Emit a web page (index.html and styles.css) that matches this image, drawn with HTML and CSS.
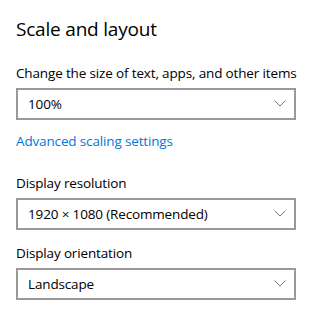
FILE: index.html
```html
<!DOCTYPE html>
<html lang="en">
<head>
    <meta charset="UTF-8">
    <title>Scale and layout</title>
    <link rel="stylesheet" href="styles.css">
</head>
<body>

<div class="panel">
    <h2 class="title">Scale and layout</h2>

    <div class="field">
        <div class="label">Change the size of text, apps, and other items</div>
        <div class="select">
            <span>100%</span>
            <svg class="chevron" width="12" height="7" viewBox="0 0 12 7"><path d="M0.5 0.5 L6 6 L11.5 0.5" fill="none" stroke="#777" stroke-width="1"/></svg>
        </div>
    </div>

    <a class="link" href="#">Advanced scaling settings</a>

    <div class="field">
        <div class="label">Display resolution</div>
        <div class="select">
            <span>1920 × 1080 (Recommended)</span>
            <svg class="chevron" width="12" height="7" viewBox="0 0 12 7"><path d="M0.5 0.5 L6 6 L11.5 0.5" fill="none" stroke="#777" stroke-width="1"/></svg>
        </div>
    </div>

    <div class="field">
        <div class="label">Display orientation</div>
        <div class="select">
            <span>Landscape</span>
            <svg class="chevron" width="12" height="7" viewBox="0 0 12 7"><path d="M0.5 0.5 L6 6 L11.5 0.5" fill="none" stroke="#777" stroke-width="1"/></svg>
        </div>
    </div>
</div>

</body>
</html>
```

FILE: styles.css
```css
* {
    box-sizing: border-box;
}
html, body {
    margin: 0;
    background: #fff;
}
body {
    font-family: 'Open Sans', 'Noto Sans', sans-serif;
    color: #000;
}
.panel {
    padding: 15px 16px 0 16px;
    width: 312px;
    display: flex;
    flex-direction: column;
}
.title {
    font-size: 19px;
    font-weight: 400;
    letter-spacing: -0.2px;
    line-height: 28px;
    margin: 0 0 20px 0;
}
.field {
    display: flex;
    flex-direction: column;
    margin-bottom: 13px;
}
.label {
    font-size: 13.5px;
    letter-spacing: -0.15px;
    line-height: 20px;
    white-space: nowrap;
    margin-bottom: 5px;
}
.select {
    height: 32px;
    border: 2px solid #999;
    display: flex;
    align-items: center;
    justify-content: space-between;
    padding: 0 8px 0 10px;
    font-size: 13.5px;
    letter-spacing: -0.15px;
    line-height: 20px;
}
.chevron {
    display: block;
    margin-top: -2px;
}
.link {
    color: #0078d7;
    text-decoration: none;
    font-size: 13.5px;
    letter-spacing: -0.15px;
    line-height: 20px;
    margin: -2px 0 22px 0;
}
```
